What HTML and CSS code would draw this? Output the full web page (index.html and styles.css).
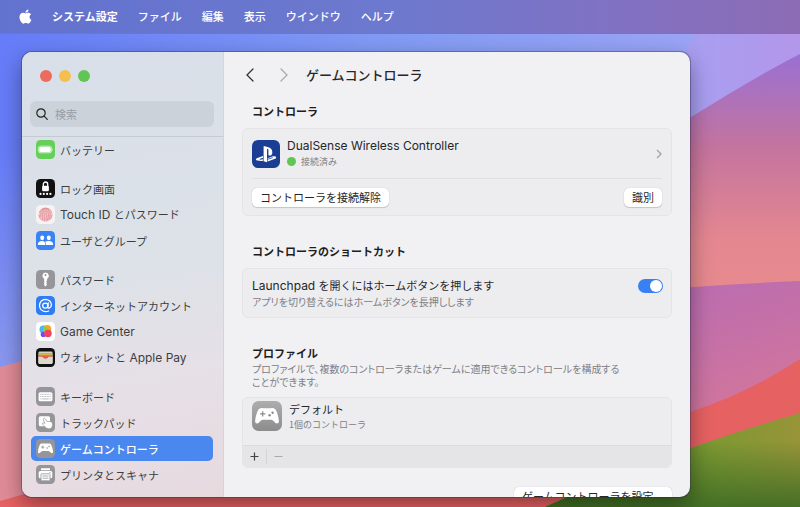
FILE: index.html
```html
<!DOCTYPE html>
<html lang="ja">
<head>
<meta charset="utf-8">
<meta name="viewport" content="width=device-width, initial-scale=1">
<title>ゲームコントローラ</title>
<link rel="stylesheet" href="styles.css">
</head>
<body>
<svg class="wallpaper" viewBox="0 0 800 507" preserveAspectRatio="none" aria-hidden="true">
  <defs>
    <linearGradient id="sky" x1="0" x2="1" y1="0" y2="0"><stop offset="0" stop-color="#667cf8"/><stop offset=".5" stop-color="#829cf4"/><stop offset=".86" stop-color="#9aa4f6"/><stop offset="1" stop-color="#b095ea"/></linearGradient>
    <linearGradient id="haze" x1="0" x2="0" y1="0" y2="1"><stop offset="0" stop-color="#8a98ee" stop-opacity="0"/><stop offset="1" stop-color="#8a98ee"/></linearGradient>
    <linearGradient id="dusk" x1="0" x2="0" y1="0" y2="1"><stop offset="0" stop-color="#9a70d4"/><stop offset=".35" stop-color="#c4749e"/><stop offset=".7" stop-color="#e48790"/><stop offset="1" stop-color="#e88c8e"/></linearGradient>
    <linearGradient id="plum" x1="0" x2=".3" y1="0" y2="1"><stop offset="0" stop-color="#b86cb2"/><stop offset="1" stop-color="#d4769a"/></linearGradient>
    <linearGradient id="hill" x1="0" x2="1" y1="0" y2="0"><stop offset="0" stop-color="#557820"/><stop offset=".5" stop-color="#739b30"/><stop offset="1" stop-color="#979438"/></linearGradient>
    <linearGradient id="shade" x1="0" x2="0" y1="0" y2="1"><stop offset=".3" stop-color="#3d6b24" stop-opacity="0"/><stop offset="1" stop-color="#3d6b24" stop-opacity=".9"/></linearGradient>
  </defs>
  <rect width="800" height="507" fill="url(#sky)"/>
  <rect y="150" width="60" height="220" fill="url(#haze)"/>
  <path d="M695 34L685 52V130L800 60V34Z" fill="#b89aea" opacity=".45"/>
  <path d="M800 54Q745 82 650 143V320H800Z" fill="url(#dusk)"/>
  <path d="M800 281Q730 284 650 290V440H800Z" fill="url(#plum)"/>
  <path d="M0 367L22 361L60 350V507H0Z" fill="#e08c97"/>
  <path d="M0 501L60 484L600 440L690 412Q750 392 800 359V507H0Z" fill="#e66162"/>
  <path d="M800 413Q670 450 545 507H800Z" fill="url(#hill)"/>
  <path d="M800 413Q670 450 545 507H800Z" fill="url(#shade)"/>
</svg>

<nav class="menubar" aria-label="メニューバー">
  <button class="menu apple" aria-label="Apple"><svg viewBox="0 0 24 24"><path fill="#fff" d="M17.05 20.28c-.98.95-2.05.8-3.08.35-1.09-.46-2.09-.48-3.24 0-1.44.62-2.2.44-3.06-.35C2.79 15.25 3.51 7.59 9.05 7.31c1.35.07 2.29.74 3.08.8 1.18-.24 2.31-.93 3.57-.84 1.51.12 2.65.72 3.4 1.8-3.12 1.87-2.38 5.98.48 7.13-.57 1.5-1.31 2.99-2.54 4.09zM12.03 7.25c-.15-2.23 1.66-4.07 3.74-4.25.29 2.58-2.34 4.5-3.74 4.25z"/></svg></button>
  <button class="menu app">システム設定</button>
  <button class="menu">ファイル</button>
  <button class="menu">編集</button>
  <button class="menu">表示</button>
  <button class="menu">ウインドウ</button>
  <button class="menu">ヘルプ</button>
</nav>

<div class="window">
  <aside class="sidebar">
    <div class="lights">
      <button class="light red" aria-label="閉じる"></button>
      <button class="light yellow" aria-label="しまう"></button>
      <button class="light green" aria-label="拡大"></button>
    </div>
    <label class="search">
      <svg viewBox="0 0 12 12" fill="none" stroke="#222" stroke-width="1.2" stroke-linecap="round"><circle cx="5" cy="5" r="4.2"/><path d="M8.1 8.1L11.3 11.3"/></svg>
      <input type="search" placeholder="検索" aria-label="検索">
    </label>
    <nav class="list" aria-label="設定">
      <div class="group">
        <a class="item" href="#"><svg class="icon" viewBox="0 0 19 19"><rect width="19" height="19" rx="4.5" fill="#66cf59"/><rect x="2.2" y="6" width="13.6" height="7" rx="2.6" fill="#a6e59e" stroke="#d4f5d0" stroke-width=".6"/><rect x="3.3" y="7.1" width="11.4" height="4.8" rx="1.7" fill="#fff"/><path d="M16.5 8.2q1.3 1.3 0 2.6z" fill="#fff"/></svg><span>バッテリー</span></a>
      </div>
      <div class="group">
        <a class="item" href="#"><svg class="icon" viewBox="0 0 19 19"><rect width="19" height="19" rx="4.5" fill="#111"/><path d="M7.3 7.3V5.2a2.2 2.2 0 0 1 4.4 0v2.1" fill="none" stroke="#fff" stroke-width="1.3"/><rect x="6.1" y="6.7" width="6.8" height="5.5" rx="1.2" fill="#fff"/><g fill="#fff"><circle cx="4.5" cy="14.9" r="1.1"/><circle cx="7.8" cy="14.9" r="1.1"/><circle cx="11.1" cy="14.9" r="1.1"/><circle cx="14.4" cy="14.9" r="1.1"/></g></svg><span>ロック画面</span></a>
        <a class="item" href="#"><svg class="icon" viewBox="0 0 19 19"><rect width="19" height="19" rx="4.5" fill="#f5f3f3"/><circle cx="9.5" cy="9.5" r="7" fill="#f3c9cd"/><g fill="none" stroke="#e08990" stroke-width=".8" stroke-linecap="round"><path d="M3.6 7.2a6.4 6.4 0 0 1 11.8 0M3 10.3q.2 2.2 1.5 3.8M16 10q-.1 2.4-1.4 4M4.7 11.4V9.3a4.8 4.8 0 0 1 9.6 0q.1 3.3-1.6 5.7M6.4 15.1q-.2-3 0-5.9a3.1 3.1 0 0 1 6.2 0q0 4-1.8 6.9M8.4 16q-.3-3.5-.1-6.7a1.2 1.2 0 0 1 2.4 0q0 3-.7 5.6M6.3 4.2q3.2-2 6.4 0"/></g></svg><span><span class="latin">Touch ID </span>とパスワード</span></a>
        <a class="item" href="#"><svg class="icon" viewBox="0 0 19 19"><rect width="19" height="19" rx="4.5" fill="#3a83f5"/><g fill="#fff"><ellipse cx="6.2" cy="6.8" rx="2" ry="2.4"/><ellipse cx="12.8" cy="6.8" rx="2" ry="2.4"/><path d="M1.8 14q0-4 4.4-4 3.2 0 3.3 4zM10.2 14q-.1-2-1-3.2 1.2-.8 3.6-.8 4.4 0 4.4 4z"/></g></svg><span>ユーザとグループ</span></a>
      </div>
      <div class="group">
        <a class="item" href="#"><svg class="icon" viewBox="0 0 19 19"><rect width="19" height="19" rx="4.5" fill="#96969a"/><path fill="#fff" fill-rule="evenodd" d="M9.5 2.6a3.4 3.4 0 0 1 1.6 6.4v1.4l-1 1 1 1.1-.9 1.1.9 1-1.6 1.8-1.3-1.2V9a3.4 3.4 0 0 1 1.3-6.4zm0 1.5a.9.9 0 1 0 .01 0z"/></svg><span>パスワード</span></a>
        <a class="item" href="#"><svg class="icon" viewBox="0 0 19 19"><rect width="19" height="19" rx="4.5" fill="#2f7df6"/><g fill="none" stroke="#fff" stroke-width="1.25" stroke-linecap="round"><circle cx="9.3" cy="9.6" r="2.6"/><path d="M12.3 6.8l-.5 4.3q.1 1.4 1.5 1 2-.8 2.1-3.2Q15 4 9.7 3.4 4 3.7 3.5 9.5q.3 5.7 6 6.1 1.8 0 3.2-.6"/></g></svg><span>インターネットアカウント</span></a>
        <a class="item" href="#"><svg class="icon" viewBox="0 0 19 19"><rect width="19" height="19" rx="4.5" fill="#fff"/><circle cx="7.4" cy="7.4" r="3.9" fill="#43b7ee"/><circle cx="7.4" cy="12.4" r="2.7" fill="#7a45ee"/><circle cx="11.2" cy="7.2" r="4.1" fill="#f2a62b"/><path d="M8.6 4q5 3 2.6 7.200-5.400-1.800-2.600-7.200z" fill="#7fcf48"/><circle cx="12" cy="11.500" r="3.700" fill="#f33f60"/><path d="M9.200 10.200q1.500 1.800.4 3.600-1.500-1.500-.4-3.600z" fill="#d34dd5"/></svg><span class="latin">Game Center</span></a>
        <a class="item" href="#"><svg class="icon" viewBox="0 0 19 19"><rect width="19" height="19" rx="4.5" fill="#111"/><rect x="2.4" y="3.5" width="14.2" height="12.5" rx="1.4" fill="#d8d2c5"/><path d="M2.8 5h13.4v1.2H2.8z" fill="#8fb4bf"/><path d="M2.8 5.8h13.4V7H2.8z" fill="#e7b844"/><path d="M2.8 6.8h13.4v1H2.8z" fill="#7fb65b"/><path d="M2.8 7.6h13.4V9h-3.8q-.8 1.800-2.900 1.800T6.600 9H2.800z" fill="#dd604c"/><path d="M2.400 8.800h3.900q1 2.500 3.200 2.500t3.200-2.500h3.900v5.800q0 1.400-1.400 1.400H3.800q-1.400 0-1.400-1.400z" fill="#ddd8cc"/></svg><span>ウォレットと<span class="latin"> Apple Pay</span></span></a>
      </div>
      <div class="group">
        <a class="item" href="#"><svg class="icon" viewBox="0 0 19 19"><rect width="19" height="19" rx="4.5" fill="#96969a"/><rect x="2.6" y="5.2" width="13.8" height="9" rx="1.5" fill="#fff"/><path d="M4.3 7.4h10.4M4.3 9.5h10.4" stroke="#b9b9bd" stroke-width="1" stroke-dasharray="1.1 .5"/><path d="M4.3 11.900h1.200M6.300 11.900h6.400M13.500 11.900h1.200" stroke="#b9b9bd"/></svg><span>キーボード</span></a>
        <a class="item" href="#"><svg class="icon" viewBox="0 0 19 19"><rect width="19" height="19" rx="4.5" fill="#96969a"/><rect x="2.8" y="3.2" width="11.2" height="10" rx="1.5" fill="#fff"/><path d="M7.6 5.4q1-.7 1.7.4l1.5 2.600 3.800.2q1.900.4 2 2.600 0 4.600-3.800 4.600-2.600 0-4-2.300l-2.500-2.600q-.2-1.200 1-1l1.600.5-1.600-3.600q-.2-1 .3-1.400z" fill="#fff" stroke="#96969a" stroke-width=".7"/></svg><span>トラックパッド</span></a>
        <a class="item selected" href="#" aria-current="page"><svg class="icon" viewBox="0 0 30 30"><rect width="30" height="30" rx="7" fill="#96969a"/><use href="#pad"/></svg><span>ゲームコントローラ</span></a>
        <a class="item" href="#"><svg class="icon" viewBox="0 0 19 19"><rect width="19" height="19" rx="4.5" fill="#96969a"/><g fill="#fff"><path d="M5 3.3h9v2H5z"/><rect x="2.7" y="6" width="13.6" height="7.3" rx="1.5"/><rect x="5" y="8.8" width="9" height="7" rx=".6" stroke="#96969a" stroke-width=".8"/></g><path d="M6.5 11h6M6.5 13.2h6" stroke="#96969a" stroke-width=".8"/><circle cx="14" cy="7.6" r=".6" fill="#96969a"/></svg><span>プリンタとスキャナ</span></a>
      </div>
    </nav>
  </aside>

  <main class="main">
    <header class="toolbar">
      <button class="nav" aria-label="戻る"><svg viewBox="0 0 8 14"><path d="M7 1L1 7l6 6"/></svg></button>
      <button class="nav" aria-label="進む" disabled><svg viewBox="0 0 8 14"><path d="M1 1l6 6-6 6"/></svg></button>
      <h1>ゲームコントローラ</h1>
    </header>

    <section>
      <h2>コントローラ</h2>
      <div class="card">
        <div class="row device">
          <svg class="ps" viewBox="0 0 28 28"><rect width="28" height="28" rx="6" fill="#193e94"/><g fill="#fff"><path d="M11.6 6.2v15l3.4 1.1V9.7c0-.6.3-1 .7-.8.6.2.7.7.7 1.3v5c2.2 1 3.9 0 3.9-2.8 0-2.9-1-4.2-4-5.2-1.2-.4-3.3-1-4.7-1z"/><path d="M15.6 18.2l5.2-1.9c3.2-.5 4.6 1.5 2.3 2.5l-7.5 2.7v-1.7l5.1-1.8c.8-.4.2-.8-.9-.5l-4.2 1.5z"/><path d="M11 15.9l-5.6 2c-2.5 1-1.6 2.2.4 2.7 1.8.5 3.6.5 5.2.2v-1.5c-1.6.5-2.5.5-3.2.3-.7-.3-.3-.6.3-.8l2.9-1z"/></g></svg>
          <div class="grow">
            <div class="label latin">DualSense Wireless Controller</div>
            <div class="sub small status"><i class="dot"></i>接続済み</div>
          </div>
          <svg class="disclose" viewBox="0 0 6 10"><path d="M1 1l4 4-4 4"/></svg>
        </div>
        <div class="row actions">
          <button class="btn">コントローラを接続解除</button>
          <button class="btn">識別</button>
        </div>
      </div>
    </section>

    <section>
      <h2>コントローラのショートカット</h2>
      <div class="card shortcut">
        <label class="grow" for="launchpad">
          <span class="label"><span class="latin">Launchpad </span>を開くにはホームボタンを押します</span>
          <span class="sub">アプリを切り替えるにはホームボタンを長押しします</span>
        </label>
        <input class="switch" id="launchpad" type="checkbox" role="switch" checked>
      </div>
    </section>

    <section>
      <h2 class="tight">プロファイル</h2>
      <p class="sub desc">プロファイルで、複数のコントローラまたはゲームに適用できるコントロールを構成する<br>ことができます。</p>
      <div class="card profiles">
        <div class="profile">
          <svg class="padicon" viewBox="0 0 30 30"><defs><linearGradient id="gray" x1="0" x2="0" y1="0" y2="1"><stop offset="0" stop-color="#adadad"/><stop offset="1" stop-color="#8c8c8c"/></linearGradient><g id="pad"><path fill="#fff" d="M8.3 7.2q1.6-.6 3.2.1h7q1.6-.7 3.2-.1 2.1.5 3.3 4.2 1.900 5.500 1.900 8.600 0 2.600-1.900 2.600-1.400 0-3.200-2.300-1.200-1.500-2.300-1.500h-9q-1.100 0-2.300 1.500-1.800 2.300-3.200 2.300-1.900 0-1.900-2.600 0-3.100 1.900-8.600 1.200-3.700 3.300-4.200z"/><path d="M10.7 10.3v5.2M8.1 12.9h5.2" stroke="#8c8c8c" stroke-width="1.2"/><circle cx="17.6" cy="14.2" r="1.2" fill="#8c8c8c"/><circle cx="20.6" cy="11.8" r="1.2" fill="#8c8c8c"/></g></defs><rect width="30" height="30" rx="6.5" fill="url(#gray)"/><use href="#pad"/></svg>
          <div>
            <div class="label">デフォルト</div>
            <div class="sub small">1個のコントローラ</div>
          </div>
        </div>
        <div class="foot">
          <button aria-label="追加"><svg viewBox="0 0 9 9"><path d="M4.5 .5v8M.5 4.5h8"/></svg></button>
          <button aria-label="削除" disabled><svg viewBox="0 0 9 9"><path d="M.5 4.5h8"/></svg></button>
        </div>
      </div>
    </section>

    <div class="more"><button class="btn">ゲームコントローラを設定<span class="latin">…</span></button></div>
  </main>
</div>
</body>
</html>
```
FILE: styles.css
```css
* { box-sizing: border-box; }

body {
  margin: 0;
  height: 100vh;
  display: flex;
  flex-direction: column;
  overflow: hidden;
  font: 11px/16px "Noto Sans CJK JP", sans-serif;
  color: #262628;
}

button {
  border: 0;
  padding: 0;
  background: none;
  color: inherit;
  font: inherit;
}

h1, h2, p { margin: 0; }
svg { display: block; flex: none; }

.latin { font-family: Inter, "Noto Sans CJK JP", sans-serif; font-size: 12px; }

.wallpaper {
  position: absolute;
  inset: 0;
  width: 100%;
  height: 100%;
  z-index: -1;
}

/* Menu bar */
.menubar {
  flex: none;
  display: flex;
  align-items: center;
  gap: 20px;
  height: 34px;
  padding: 0 16px 1px;
  background: linear-gradient(90deg, #6272cf, #6d79cd 50%, #8072c4 75%, #8c6cb4);
  border-bottom: 1px solid #7a70c4;
  color: #fff;
  font-weight: 500;
  text-shadow: 0 1px 2px rgba(0, 0, 0, .25);
}
.menu { white-space: nowrap; }
.apple svg { width: 19px; height: 19px; }
.apple { margin-right: -3px; }
.app { font-weight: 700; }

/* Window */
.window {
  flex: 1;
  min-height: 0;
  display: flex;
  margin: 18px 110px 10px 22px;
  border-radius: 10px;
  overflow: hidden;
  background: #f1f1f3;
  box-shadow: 0 0 0 1px rgba(40, 30, 90, .35), 0 8px 22px rgba(0, 0, 0, .4);
}

.sidebar {
  flex: none;
  width: 202px;
  display: flex;
  flex-direction: column;
  background: linear-gradient(170deg, #d9dfe8, #dde2e8 50%, #e6e0e7 72%, #e6dadf);
  border-right: 1px solid #d3d5da;
}
.lights { display: flex; gap: 7px; padding: 18px 18px 0; }
.light { width: 12px; height: 12px; border-radius: 50%; }
.red { background: #ed6a5e; }
.yellow { background: #f5bf4f; }
.green { background: #61c554; }

.search {
  flex: none;
  display: flex;
  align-items: center;
  gap: 7px;
  height: 26px;
  margin: 19px 9px 9px 8px;
  padding: 0 6px;
  border-radius: 6px;
  background: #ccd2da;
}
.search svg { width: 12px; height: 12px; }
.search input {
  flex: 1;
  min-width: 0;
  padding: 0;
  border: 0;
  outline: 0;
  background: none;
  font: inherit;
}
.search input::placeholder { color: #989da4; }

.list {
  flex: 1;
  min-height: 0;
  overflow: hidden;
  display: flex;
  flex-direction: column;
  gap: 14px;
  padding: 0 10px 0 9px;
  border-top: 1px solid #c6cbd2;
}
.group { display: grid; gap: 1px; }
.item {
  display: flex;
  align-items: center;
  gap: 5px;
  height: 25px;
  padding: 0 5px;
  border-radius: 5px;
  color: #3c3e42;
  text-decoration: none;
  white-space: nowrap;
}
.icon { width: 19px; height: 19px; }
.selected { background: #4a87ee; color: #fff; font-weight: 500; }

/* Content */
.main {
  flex: 1;
  min-width: 0;
  overflow: hidden;
  padding: 0 18px;
}
.toolbar {
  display: flex;
  align-items: center;
  gap: 26px;
  height: 43px;
  padding: 3px 0 0 4px;
}
.nav svg { width: 8px; height: 14px; fill: none; stroke: #333; stroke-width: 1.3; stroke-linecap: round; }
.nav:disabled svg { stroke: #aaa; }
.toolbar h1 { margin-left: -8px; font-size: 13px; font-weight: 500; }

section { margin-bottom: 19px; }
h2 { padding: 8px 10px; font-size: 11px; line-height: 17px; font-weight: 700; color: #1d1d1f; }
h2.tight { padding-bottom: 0; }

.card {
  border: 1px solid #e4e4e6;
  border-radius: 6px;
  background: #ededef;
}
.grow { flex: 1; min-width: 0; }
.label { display: block; line-height: 16px; }
.sub { display: block; font-size: 10px; line-height: 16px; color: #808084; font-feature-settings: "palt"; }
.small { font-size: 9px; font-feature-settings: normal; }

.row { display: flex; align-items: center; margin: 0 9px; }
.device { gap: 7px; height: 50px; border-bottom: 1px solid #e0e0e2; }
.ps { width: 28px; height: 28px; }
.status { display: flex; align-items: center; gap: 5px; }
.dot { width: 9px; height: 9px; border-radius: 50%; background: #61c554; }
.disclose { width: 6px; height: 10px; fill: none; stroke: #a2a2a6; stroke-width: 1.3; }
.actions { justify-content: space-between; height: 36px; }

.btn {
  height: 19px;
  padding: 0 8px;
  border-radius: 5px;
  background: #fff;
  box-shadow: 0 0 1px rgba(0, 0, 0, .25), 0 1px 1px rgba(0, 0, 0, .15);
  line-height: 19px;
  white-space: nowrap;
}

.shortcut { display: flex; align-items: flex-start; padding: 8px 8px 7px 9px; }
.switch {
  appearance: none;
  flex: none;
  width: 25px;
  height: 14px;
  margin: 2px 0 0;
  padding: 1px;
  border-radius: 7px;
  background: #c8c8cc;
}
.switch::before {
  content: "";
  display: block;
  width: 12px;
  height: 12px;
  border-radius: 50%;
  background: #fff;
}
.switch:checked { background: #3a80f5; }
.switch:checked::before { margin-left: auto; }

.desc { padding: 0 10px 9px; line-height: 13px; }
.profiles { overflow: hidden; }
.profile { display: flex; gap: 7px; height: 47px; padding: 3px 9px; }
.padicon { width: 30px; height: 30px; }
.foot {
  display: flex;
  align-items: center;
  height: 22px;
  background: #e5e5e7;
  border-top: 1px solid #dcdcde;
}
.foot button { padding: 3px 7px; }
.foot button + button { border-left: 1px solid #d4d4d6; }
.foot svg { width: 9px; height: 9px; fill: none; stroke: #444; stroke-width: 1.2; }
.foot :disabled svg { stroke: #aaa; }

.more { display: flex; justify-content: flex-end; }
```
